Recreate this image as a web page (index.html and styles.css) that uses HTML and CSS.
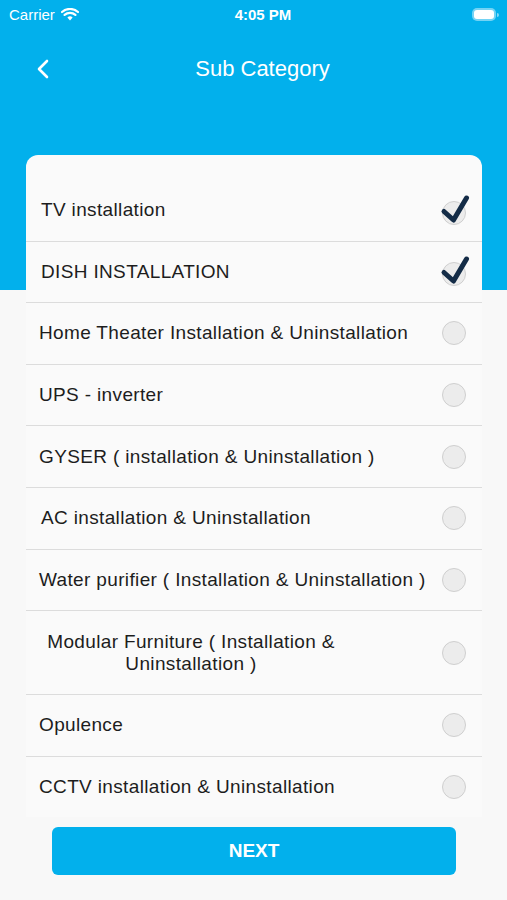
FILE: index.html
```html
<!DOCTYPE html>
<html lang="en">
  <head>
    <meta name="viewport" content="width=device-width, initial-scale=1">
    <title>Sub Category</title>
    <link rel="stylesheet" href="styles.css">
  </head>
  <body>
  <div id="status">
    <span class="carrier">Carrier
      <svg class="wifi" width="18" height="13" viewBox="0 0 18 13"><path d="M9 12.5l2.6-3.1a4 4 0 0 0-5.2 0z" fill="#fff"/><path d="M3.6 6.9a8 8 0 0 1 10.8 0M1 4a12 12 0 0 1 16 0" stroke="#fff" stroke-width="2.2" fill="none" stroke-linecap="round"/></svg>
    </span>
    <span class="time">4:05 PM</span>
    <span class="battery"><span class="level"></span></span>
  </div>
  <div id="nav">
    <svg class="back" width="14" height="20" viewBox="0 0 14 20"><path d="M11 2L3 10l8 8" stroke="#fff" stroke-width="2.6" fill="none" stroke-linecap="round" stroke-linejoin="round"/></svg>
    <span class="title">Sub Category</span>
  </div>
  <div id="card">
    <div class="row"><span class="label shift">TV installation</span><span class="radio on"></span></div>
    <div class="row"><span class="label shift">DISH INSTALLATION</span><span class="radio on"></span></div>
    <div class="row"><span class="label">Home Theater Installation &amp; Uninstallation</span><span class="radio"></span></div>
    <div class="row"><span class="label">UPS - inverter</span><span class="radio"></span></div>
    <div class="row"><span class="label">GYSER ( installation &amp; Uninstallation )</span><span class="radio"></span></div>
    <div class="row"><span class="label shift">AC installation &amp; Uninstallation</span><span class="radio"></span></div>
    <div class="row"><span class="label">Water purifier ( Installation &amp; Uninstallation )</span><span class="radio"></span></div>
    <div class="row tall"><span class="label center">Modular Furniture ( Installation &amp; Uninstallation )</span><span class="radio"></span></div>
    <div class="row"><span class="label">Opulence</span><span class="radio"></span></div>
    <div class="row last"><span class="label">CCTV installation &amp; Uninstallation</span><span class="radio"></span></div>
  </div>
  <div id="footer"><button>NEXT</button></div>
  <script>
let radios = document.getElementsByClassName("radio");
let check = '<svg class="tick" width="32" height="32" viewBox="0 0 32 32"><path d="M6 19.5L15.5 28L28.5 6" stroke="#142c47" stroke-width="5" fill="none" stroke-linecap="round" stroke-linejoin="round"/></svg>';
for (let k=0; k<radios.length; k++) {
  if (radios[k].classList.contains("on")) radios[k].innerHTML = check;
}
  </script>
  </body>
</html>
```

FILE: styles.css
```css
html, body {
  margin: 0;
  padding: 0;
  width: 100%;
  height: 100%;
}

body {
  font-family: "Liberation Sans", Arial, sans-serif;
  background: linear-gradient(#02b0ec 0, #02b0ec 290px, #f8f8f8 290px);
  color: #1d1d1d;
}

#status {
  height: 28px;
  display: flex;
  align-items: center;
  justify-content: space-between;
  padding: 0 10px 0 9px;
  color: #fff;
  font-size: 15px;
}

#status .carrier {
  width: 100px;
  display: flex;
  align-items: center;
  gap: 6px;
}

#status .time {
  font-weight: bold;
  font-size: 15px;
  margin-left: 20px;
}

#status .battery {
  width: 100px;
  display: flex;
  justify-content: flex-end;
}

.battery .level {
  width: 20px;
  height: 9px;
  background: #fff;
  border-radius: 3px;
  box-shadow: 0 0 0 2px rgba(255,255,255,0.45);
  position: relative;
  margin-right: 3px;
}

.battery .level::after {
  content: "";
  position: absolute;
  right: -5px;
  top: 3px;
  width: 2px;
  height: 4px;
  border-radius: 0 2px 2px 0;
  background: rgba(255,255,255,0.5);
}

#nav {
  height: 82px;
  display: flex;
  align-items: center;
  padding-left: 36px;
  color: #fff;
}

#nav .title {
  flex-grow: 1;
  text-align: center;
  font-size: 22px;
  padding-right: 32px;
}

#card {
  margin: 45px 25px 0 26px;
  padding-top: 25px;
  background: #fafafa;
  border-radius: 12px 12px 0 0;
}

.row {
  min-height: 60.6px;
  display: flex;
  align-items: center;
  justify-content: space-between;
  border-bottom: 1px solid #dcdcdc;
  padding: 0 16px 0 13px;
  font-size: 19px;
  letter-spacing: 0.35px;
}

.row.tall {
  min-height: 83px;
}

.row.last {
  border-bottom: none;
}

.label.shift {
  padding-left: 2px;
}

.label.center {
  width: 304px;
  text-align: center;
  line-height: 22px;
}

.radio {
  width: 22px;
  height: 22px;
  border-radius: 50%;
  background: #ececec;
  border: 1.5px solid #cfcfcf;
  position: relative;
  flex-shrink: 0;
}

.radio.on {
  margin-top: 5px;
}

.radio .tick {
  position: absolute;
  left: -5px;
  top: -10px;
}

#footer {
  padding: 10px 51px 0 52px;
}

#footer button {
  width: 100%;
  height: 48px;
  border: none;
  border-radius: 6px;
  background: #02b0ec;
  color: #fff;
  font-family: "Liberation Sans", Arial, sans-serif;
  font-size: 19px;
  font-weight: bold;
  margin: 0;
  padding: 0;
}
```
